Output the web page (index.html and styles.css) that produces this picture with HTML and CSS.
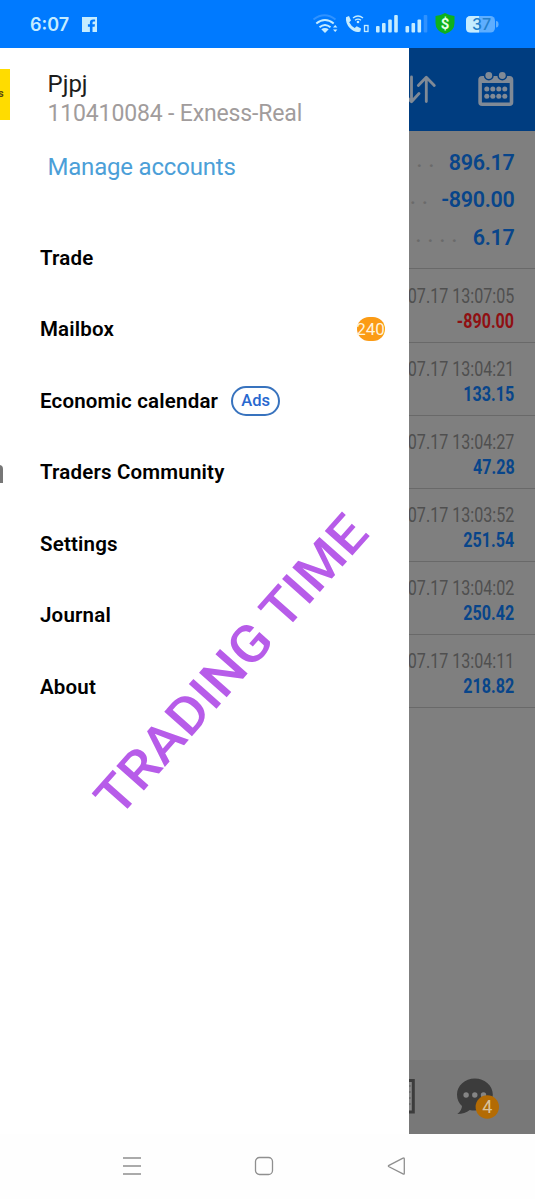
FILE: index.html
```
<!DOCTYPE html>
<html lang="en">
<head>
  <meta charset="UTF-8">
  <meta name="viewport" content="width=device-width, initial-scale=1.0">
  <title>Trading</title>
  <link rel="stylesheet" href="styles.css">
</head>

<body>
  <div class="phone">
    <header class="status">
      <span class="time">6:07</span>
      <svg class="fb" width="15" height="15" viewBox="0 0 15 15">
        <path d="M0 0h15v15h-4.500v-5.300h2.100l.4-2.400h-2.500v-1.500q0-1.200 1.300-1.200h1.300v-2.200h-2q-3.200 0-3.200 3.100v1.800h-2v2.400h2v5.300h-7.900z" fill="#c5ecff"/>
      </svg>
      <svg class="status-icons" width="205" height="24" viewBox="312 12 205 24">
        <g fill="none" stroke="#c5ecff" stroke-width="2">
          <path d="M313.500 19.500q11-8.500 22 0" stroke="#2f92ff"/>
          <path d="M316.300 23.500q8.700-7 17.400 0"/>
          <path d="M319.500 27.200q5.500-4.500 11 0"/>
        </g>
        <path d="M321.300 29.300q3.700-2.800 7.400 0l-3.700 3.700z" fill="#c5ecff"/>
        <path d="M333 27.500l2.200-2.500 2.200 2.500zM333 29.500h4.400l-2.200 2.500z" fill="#c5ecff"/>
        <path d="M346 17.200l3-1.200 2 4.500-1.800 1.700q2 4 5.500 5.700l2-1.700 4.300 2.300-.7 3q-5 2-10.500-3.500-4.500-5-3.800-10.800z" fill="#c5ecff"/>
        <g fill="none" stroke="#c5ecff" stroke-width="1.300">
          <path d="M353 18q5-4 10 0M355 20.300q3-2.400 6 0"/>
          <rect x="364.500" y="25.500" width="3.500" height="6"/>
        </g>
        <circle cx="358" cy="22" r="1.300" fill="#c5ecff"/>
        <g fill="#c5ecff">
          <rect x="376" y="26" width="3.600" height="6.500" rx="1"/>
          <rect x="382" y="23" width="3.600" height="9.500" rx="1"/>
          <rect x="388.200" y="19.500" width="3.600" height="13" rx="1"/>
          <rect x="394.200" y="15" width="3.600" height="17.500" rx="1"/>
          <rect x="405.500" y="26" width="3.600" height="6.500" rx="1"/>
          <rect x="411.500" y="23" width="3.600" height="9.500" rx="1"/>
          <rect x="417.500" y="19.500" width="3.600" height="13" rx="1"/>
        </g>
        <rect x="423.700" y="15" width="3.600" height="17.500" rx="1" fill="#2f92ff"/>
        <path d="M445 13q4 2.500 9.500 3v7q0 8-9.500 11-9.500-3-9.500-11v-7q5.500-.5 9.500-3z" fill="#0eb11c"/>
        <text class="dollar" x="445" y="28.500" text-anchor="middle">$</text>
        <rect x="466" y="16" width="29" height="16.500" rx="4.500" fill="#5eaeff"/>
        <path d="M470.500 16h8.500v16.500h-8.500q-4.500 0-4.500-4.500v-7.500q0-4.500 4.500-4.500z" fill="#c5ecff"/>
        <path d="M496 21q2.500 0 2.500 3.200t-2.500 3.200z" fill="#5eaeff"/>
        <text class="battery" x="481.500" y="30" text-anchor="middle">37</text>
      </svg>
    </header>

    <main class="screen">
      <aside class="drawer">
        <section class="account">
          <div class="logo"><span>s</span></div>
          <div class="account-info">
            <div class="name">Pjpj</div>
            <div class="server">110410084 - Exness-Real</div>
            <a class="manage">Manage accounts</a>
          </div>
        </section>
        <nav class="menu">
          <div class="item">Trade</div>
          <div class="item"><span>Mailbox</span><span class="count">240</span></div>
          <div class="item"><span>Economic calendar</span><span class="ads">Ads</span></div>
          <div class="item community">Traders Community</div>
          <div class="item">Settings</div>
          <div class="item">Journal</div>
          <div class="item">About</div>
        </nav>
        <svg class="watermark" width="320" height="340" viewBox="80 490 320 340">
          <text transform="translate(118.500 819) rotate(-48.400)" x="0" y="0" textLength="380" lengthAdjust="spacingAndGlyphs">TRADING TIME</text>
        </svg>
      </aside>

      <section class="history">
        <div class="toolbar">
          <svg width="127" height="83" viewBox="409.200 48 127 83">
            <g fill="none" stroke="#808a96" stroke-width="2.800" stroke-linecap="round" stroke-linejoin="round">
              <path d="M411.700 77v24M403.500 93.500l8.200 8.200 7.500-8.200"/>
              <path d="M426.500 101.500V77.500M418.500 85.500l8-8.300 8 8.300"/>
            </g>
            <rect x="480.300" y="77.800" width="31.400" height="26.400" rx="2" fill="none" stroke="#808a96" stroke-width="3.600"/>
            <path d="M480 77h32v6h-32z" fill="#808a96"/>
            <g fill="#808a96" stroke="#003d80" stroke-width="1.500">
              <circle cx="489" cy="75.500" r="4.200"/>
              <circle cx="502.500" cy="75.500" r="4.200"/>
            </g>
            <g fill="#808a96">
              <circle cx="487" cy="89" r="2.500"/><circle cx="493" cy="89" r="2.500"/><circle cx="499" cy="89" r="2.500"/><circle cx="505" cy="89" r="2.500"/>
              <circle cx="487" cy="96.300" r="2.500"/><circle cx="493" cy="96.300" r="2.500"/><circle cx="499" cy="96.300" r="2.500"/><circle cx="505" cy="96.300" r="2.500"/>
            </g>
          </svg>
        </div>
        <div class="summary">
          <div class="total"><span class="dots d1">..</span><span>896.17</span></div>
          <div class="total"><span class="dots d2">..</span><span>-890.00</span></div>
          <div class="total"><span class="dots d3">....</span><span>6.17</span></div>
        </div>
        <div class="deals">
          <div class="deal"><span class="date">07.17 13:07:05</span><b class="loss">-890.00</b></div>
          <div class="deal"><span class="date">07.17 13:04:21</span><b>133.15</b></div>
          <div class="deal"><span class="date">07.17 13:04:27</span><b>47.28</b></div>
          <div class="deal"><span class="date">07.17 13:03:52</span><b>251.54</b></div>
          <div class="deal"><span class="date">07.17 13:04:02</span><b>250.42</b></div>
          <div class="deal"><span class="date">07.17 13:04:11</span><b>218.82</b></div>
        </div>
        <div class="tabs">
          <svg width="127" height="73" viewBox="409.200 1060 127 73">
            <path d="M408 1080.500h5.500v31.500h-5.500" fill="#858585" stroke="#3c3c3c" stroke-width="3"/>
            <path d="M408 1086h3M408 1092h3M408 1098h3M408 1104h3" stroke="#555"/>
            <path d="M475 1078.500c10 0 18 7 18 16s-8 16-18 16q-3 0-5-.6-5 4-12.500 4.100 4.500-3.500 4.700-8-5-4.500-5-11.500c0-9 8-16 17.800-16z" fill="#3c3c3c"/>
            <g fill="#858585"><circle cx="466.300" cy="1095" r="2.700"/><circle cx="475" cy="1095" r="2.700"/><circle cx="483.700" cy="1095" r="2.700"/></g>
            <circle cx="487.500" cy="1107" r="11.700" fill="#b36b04"/>
            <text class="unread" x="487.500" y="1113" text-anchor="middle">4</text>
          </svg>
        </div>
      </section>
    </main>

    <footer class="navbar">
      <svg width="20" height="20" viewBox="0 0 20 20"><path d="M1 2h18M1 10h18M1 18h18"/></svg>
      <svg width="20" height="20" viewBox="0 0 20 20"><rect x="1.500" y="1.500" width="17" height="17" rx="4"/></svg>
      <svg width="20" height="20" viewBox="0 0 20 20"><path d="M17 2.200q1.300-.7 1.300.7v14.300q0 1.400-1.300.7l-14-7.100q-1.300-.8 0-1.500z"/></svg>
    </footer>
  </div>
</body>
</html>
```
FILE: styles.css
```
* {
  box-sizing: border-box;
}

body {
  margin: 0;
  font-family: Roboto, sans-serif;
  background: #fefefe;
  color: #000;
}

.phone {
  width: 535px;
  height: 1199px;
  display: flex;
  flex-direction: column;
  overflow: hidden;
}

.status {
  height: 48px;
  display: flex;
  align-items: center;
  padding: 0 18px 0 30px;
  background: #007aff;
}

.time {
  width: 52px;
  color: #c5ecff;
  font-family: Inter, sans-serif;
  font-size: 18px;
  font-weight: 600;
}

.status-icons {
  margin-left: auto;
}

.dollar {
  font-size: 15px;
  font-weight: 700;
  fill: #e6ffe6;
}

.battery {
  font-family: Inter, sans-serif;
  font-size: 16px;
  font-weight: 500;
  fill: #237fcb;
}

.screen {
  height: 1085.5px;
  display: flex;
}

.drawer {
  position: relative;
  width: 408.5px;
  background: #fff;
}

.account {
  height: 174px;
  display: flex;
  padding-top: 21px;
}

.logo {
  width: 9.5px;
  height: 51px;
  margin-right: 38px;
  background: #ffdc00;
  font-size: 11px;
  font-weight: 700;
  line-height: 49px;
  color: #5c4a10;
}

.logo span {
  margin-left: -2px;
}

.account-info {
  white-space: nowrap;
}

.name {
  font-size: 24px;
  line-height: 30px;
  color: #1c1c1c;
}

.server {
  font-size: 23px;
  line-height: 30px;
  letter-spacing: -0.15px;
  color: #a19c9c;
}

.manage {
  display: block;
  margin-top: 22.5px;
  font-size: 24px;
  line-height: 30px;
  letter-spacing: -0.2px;
  color: #4c9fd8;
}

.item {
  position: relative;
  height: 71.5px;
  display: flex;
  align-items: center;
  padding: 0 24px 0 40px;
  font-size: 20.5px;
  font-weight: 600;
  letter-spacing: 0.18px;
  white-space: nowrap;
}

.count {
  width: 28px;
  height: 24px;
  margin-left: auto;
  display: flex;
  align-items: center;
  justify-content: center;
  border-radius: 12px;
  background: #fb9b15;
  color: #fff3dc;
  font-size: 17px;
  font-weight: 400;
  letter-spacing: 0;
}

.ads {
  width: 49px;
  height: 30px;
  margin-left: 13px;
  display: flex;
  align-items: center;
  justify-content: center;
  border: 2px solid #3873be;
  border-radius: 15px;
  color: #2868cf;
  font-size: 16.5px;
  font-weight: 500;
  letter-spacing: 0;
}

/* edge of the icon that is scrolled off to the left */
.community::before {
  content: "";
  position: absolute;
  left: -8px;
  top: 28px;
  width: 5px;
  height: 15px;
  border: 3px solid #777;
  border-bottom: 0;
  border-radius: 4px 4px 0 0;
}

.watermark {
  position: absolute;
  left: 80px;
  top: 442px;
}

.watermark text {
  font-size: 52px;
  font-weight: 500;
  fill: #b75ce9;
}

.history {
  flex: 1;
  min-width: 0;
  display: flex;
  flex-direction: column;
  overflow: hidden;
  background: #7f7f7f;
}

.toolbar {
  height: 83px;
  background: #003d80;
}

.summary {
  height: 138px;
  padding: 13px 20.5px 0 0;
  border-bottom: 1px solid #696969;
}

.total {
  height: 37.3px;
  display: flex;
  align-items: center;
  justify-content: flex-end;
  font-size: 21.5px;
  font-weight: 600;
  letter-spacing: -0.3px;
  color: #08458a;
}

.dots {
  padding-bottom: 4px;
  color: #6a6a6a;
  font-size: 18px;
  font-weight: 700;
  letter-spacing: 6.8px;
}

.d1 {
  margin-right: 8px;
}

.d2 {
  margin-right: 7px;
}

.d3 {
  margin-right: 9px;
}

.deal {
  height: 73px;
  display: flex;
  flex-direction: column;
  align-items: flex-end;
  padding: 14px 20.5px 0 0;
  border-bottom: 1px solid #696969;
  white-space: nowrap;
}

.deal:first-child {
  height: 74px;
  padding-top: 15px;
}

.deal span,
.deal b {
  font-size: 20px;
  line-height: 25px;
  transform: scaleX(0.805);
  transform-origin: right;
}

.date {
  color: #4f4f4f;
}

.deal b {
  color: #08458a;
}

.deal b.loss {
  color: #8f0f12;
}

.tabs {
  height: 73.5px;
  margin-top: auto;
  background: #787878;
}

.unread {
  font-size: 18px;
  fill: #d8c3a0;
}

.navbar {
  flex: 1;
  display: flex;
  align-items: center;
  justify-content: space-between;
  padding: 0 129px 0 122px;
}

.navbar svg {
  fill: none;
  stroke: #8f8f8f;
  stroke-width: 1.3;
}
```
